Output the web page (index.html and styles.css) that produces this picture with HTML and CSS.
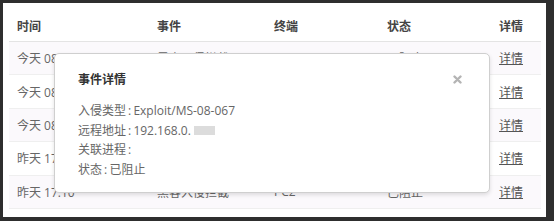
FILE: index.html
```html
<!doctype html>
<html>
  <head>
    <title>安全事件</title>
    <link rel="stylesheet" href="styles.css">
  </head>
  <body>
    <div class="panel">
      <table class="events">
        <colgroup>
          <col class="c-time">
          <col class="c-event">
          <col class="c-term">
          <col class="c-state">
          <col>
        </colgroup>
        <thead>
          <tr>
            <th>时间</th>
            <th>事件</th>
            <th>终端</th>
            <th>状态</th>
            <th>详情</th>
          </tr>
        </thead>
        <tbody>
          <tr>
            <td>今天 08:32</td>
            <td>黑客入侵拦截</td>
            <td>PC2</td>
            <td>已阻止</td>
            <td><a href="#">详情</a></td>
          </tr>
          <tr>
            <td>今天 08:15</td>
            <td>黑客入侵拦截</td>
            <td>PC2</td>
            <td>已阻止</td>
            <td><a href="#">详情</a></td>
          </tr>
          <tr>
            <td>今天 08:02</td>
            <td>黑客入侵拦截</td>
            <td>PC2</td>
            <td>已阻止</td>
            <td><a href="#">详情</a></td>
          </tr>
          <tr>
            <td>昨天 17:46</td>
            <td>黑客入侵拦截</td>
            <td>PC2</td>
            <td>已阻止</td>
            <td><a href="#">详情</a></td>
          </tr>
          <tr>
            <td>昨天 17:10</td>
            <td>黑客入侵拦截</td>
            <td>PC2</td>
            <td>已阻止</td>
            <td><a href="#">详情</a></td>
          </tr>
        </tbody>
      </table>

      <div class="modal">
        <div class="modal-head">
          <h4>事件详情</h4>
          <span class="close">
            <svg width="9" height="9" viewBox="0 0 9 9">
              <path d="M1.5 1.5L7.5 7.5M7.5 1.5L1.5 7.5" stroke="#b4b4b4" stroke-width="2.4" stroke-linecap="round"/>
            </svg>
          </span>
        </div>
        <div class="modal-body">
          <p>入侵类型 : Exploit/MS-08-067</p>
          <p class="addr">远程地址 : 192.168.0.<i class="masked"></i></p>
          <p>关联进程 :</p>
          <p>状态 : 已阻止</p>
        </div>
      </div>
    </div>
  </body>
</html>
```

FILE: styles.css
```css
body {
  margin: 0;
  background: #2e2e2e;
  font-family: "Open Sans", "Noto Sans CJK SC", sans-serif;
  font-size: 12px;
  color: #666;
}
.panel {
  position: relative;
  height: 207px;
  margin: 3px 8px 0 3px;
  padding: 7px 5px 0 6px;
  background: #fff;
}
.events {
  width: 100%;
  border-collapse: collapse;
  table-layout: fixed;
}
.c-time {
  width: 140px;
}
.c-event {
  width: 117px;
}
.c-term {
  width: 113px;
}
.c-state {
  width: 112px;
}
.events th {
  height: 31px;
  padding: 0 8px;
  text-align: left;
  font-weight: bold;
  color: #444;
  border-bottom: 1px solid #e4e4e4;
}
.events td {
  height: 32.4px;
  padding: 0 8px;
  border-bottom: 1px solid #efefef;
  white-space: nowrap;
}
.events tbody tr:nth-child(odd) {
  background: #fbf9fc;
}
.events a {
  color: #555;
}
.modal {
  position: absolute;
  left: 51px;
  top: 50px;
  width: 434px;
  height: 138px;
  background: #fff;
  border: 1px solid #cfcfcf;
  border-radius: 5px;
  box-shadow: 0 2px 4px rgba(0, 0, 0, 0.12);
}
.modal-head {
  display: flex;
  justify-content: space-between;
  align-items: center;
  padding: 16px 27px 0 23px;
}
.modal-head h4 {
  margin: 0;
  font-size: 12px;
  line-height: 20px;
  font-weight: bold;
  color: #333;
}
.close {
  display: flex;
  margin-top: -2px;
}
.modal-body {
  padding: 11px 23px 0;
}
.modal-body p {
  margin: 0;
  line-height: 19.5px;
  word-spacing: -1px;
}
.addr {
  display: flex;
  align-items: center;
}
.masked {
  width: 21px;
  height: 9px;
  margin-left: 3px;
  background: #dcdcdc;
}
```
